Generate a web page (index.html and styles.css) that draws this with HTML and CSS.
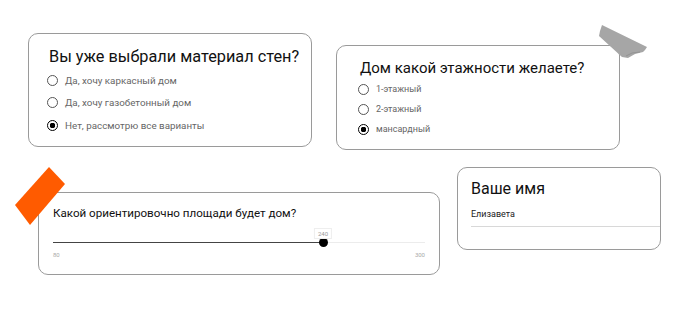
FILE: index.html
```html
<!DOCTYPE html>
<html lang="ru">
<head>
  <meta charset="UTF-8" />
  <title>Квиз</title>
  <link rel="stylesheet" href="styles.css">
</head>
<body>
  <div class="row row-top">
    <div class="card card-walls">
      <h2 class="q-title">Вы уже выбрали материал стен?</h2>
      <div class="option"><span class="radio"></span>Да, хочу каркасный дом</div>
      <div class="option"><span class="radio"></span>Да, хочу газобетонный дом</div>
      <div class="option"><span class="radio checked"></span>Нет, рассмотрю все варианты</div>
    </div>

    <div class="card card-floors">
      <svg class="tape tape-gray" width="54" height="38" viewBox="0 0 54 38">
        <polygon points="6,3 51,25 49,28 47,30 39,32 32,36 26,35 3,14 4,9" fill="#a6a6a6"/>
        <polyline points="30,34 36,31 44,30" fill="none" stroke="#8e8e8e" stroke-width="0.8"/>
      </svg>
      <h2 class="q-title small">Дом какой этажности желаете?</h2>
      <div class="option small"><span class="radio"></span>1-этажный</div>
      <div class="option small"><span class="radio"></span>2-этажный</div>
      <div class="option small"><span class="radio checked"></span>мансардный</div>
    </div>
  </div>

  <div class="row row-bottom">
    <div class="card card-area">
      <svg class="tape tape-orange" width="54" height="62" viewBox="0 0 54 62">
        <polygon points="2,40 36,2 52,19 17,60" fill="#ff5b00"/>
      </svg>
      <h3 class="area-title">Какой ориентировочно площади будет дом?</h3>
      <div class="slider">
        <div class="track">
          <div class="track-fill" style="width: 72.6%"></div>
          <div class="thumb" style="left: 72.6%">
            <span class="bubble">240</span>
          </div>
        </div>
        <div class="scale"><span>80</span><span>300</span></div>
      </div>
    </div>

    <div class="card card-name">
      <h3 class="name-title">Ваше имя</h3>
      <div class="name-input">Елизавета</div>
    </div>
  </div>
</body>
</html>
```

FILE: styles.css
```css
body {
  margin: 0;
  background: #fff;
  font-family: Roboto, "Open Sans", sans-serif;
  color: #111;
}
.row {
  display: flex;
  align-items: flex-start;
}
.row-top { padding: 33px 0 0 28px; gap: 24px; }
.row-bottom { margin-top: 17px; }

.card {
  position: relative;
  box-sizing: border-box;
  background: #fff;
  border: 1px solid #9a9a9a;
  border-radius: 10px;
}

/* radio questions */
.card-walls {
  width: 284px;
  height: 114px;
  padding: 12px 18px 0;
}
.card-floors {
  width: 284px;
  height: 105px;
  margin-top: 12px;
  padding: 12px 21px 0;
}
.q-title {
  margin: 0 0 2px 2px;
  font-size: 16.3px;
  font-weight: 400;
  line-height: 21px;
  white-space: nowrap;
}
.q-title.small {
  margin-bottom: 1px;
  font-size: 15px;
  line-height: 20px;
}

.option {
  display: flex;
  align-items: center;
  gap: 7px;
  height: 22.5px;
  font-size: 9.8px;
  color: #666;
}
.option.small { height: 20px; font-size: 9px; }
.radio {
  box-sizing: border-box;
  width: 11px;
  height: 11px;
  border: 1.3px solid #555;
  border-radius: 50%;
  flex: none;
}
.radio.checked {
  border-color: #000;
  background: radial-gradient(circle, #000 0 2.6px, #fff 3px);
}

.tape { position: absolute; }
.tape-gray { left: 259px; top: -24px; }
.tape-orange { left: -26px; top: -28px; }

/* slider card */
.card-area {
  width: 402px;
  height: 83px;
  margin: 25px 0 0 38px;
  padding: 12px 14px 0;
}
.area-title {
  margin: 0;
  font-size: 11.6px;
  font-weight: 400;
  line-height: 16px;
  white-space: nowrap;
}
.slider { margin-top: 21px; }
.track {
  position: relative;
  height: 1px;
  background: #ececec;
}
.track-fill {
  height: 1px;
  background: #444;
}
.thumb {
  position: absolute;
  top: -4px;
  width: 9px;
  height: 9px;
  margin-left: -4.5px;
  border-radius: 50%;
  background: #000;
}
.bubble {
  position: absolute;
  bottom: 8px;
  left: 50%;
  transform: translateX(-50%);
  padding: 1px 3px;
  background: #fff;
  border: 1px solid #eee;
  font-size: 6px;
  color: #999;
}
.scale {
  display: flex;
  justify-content: space-between;
  margin-top: 8px;
  font-size: 6px;
  color: #aaa;
}

/* name card */
.card-name {
  width: 204px;
  height: 83px;
  margin-left: 17px;
  padding: 12px 0 0 13px;
}
.name-title {
  margin: 0;
  font-size: 16px;
  font-weight: 400;
  line-height: 18px;
}
.name-input {
  margin-top: 11px;
  padding-bottom: 7px;
  border-bottom: 1px solid #d8d8d8;
  font-size: 9px;
  color: #222;
}
```
